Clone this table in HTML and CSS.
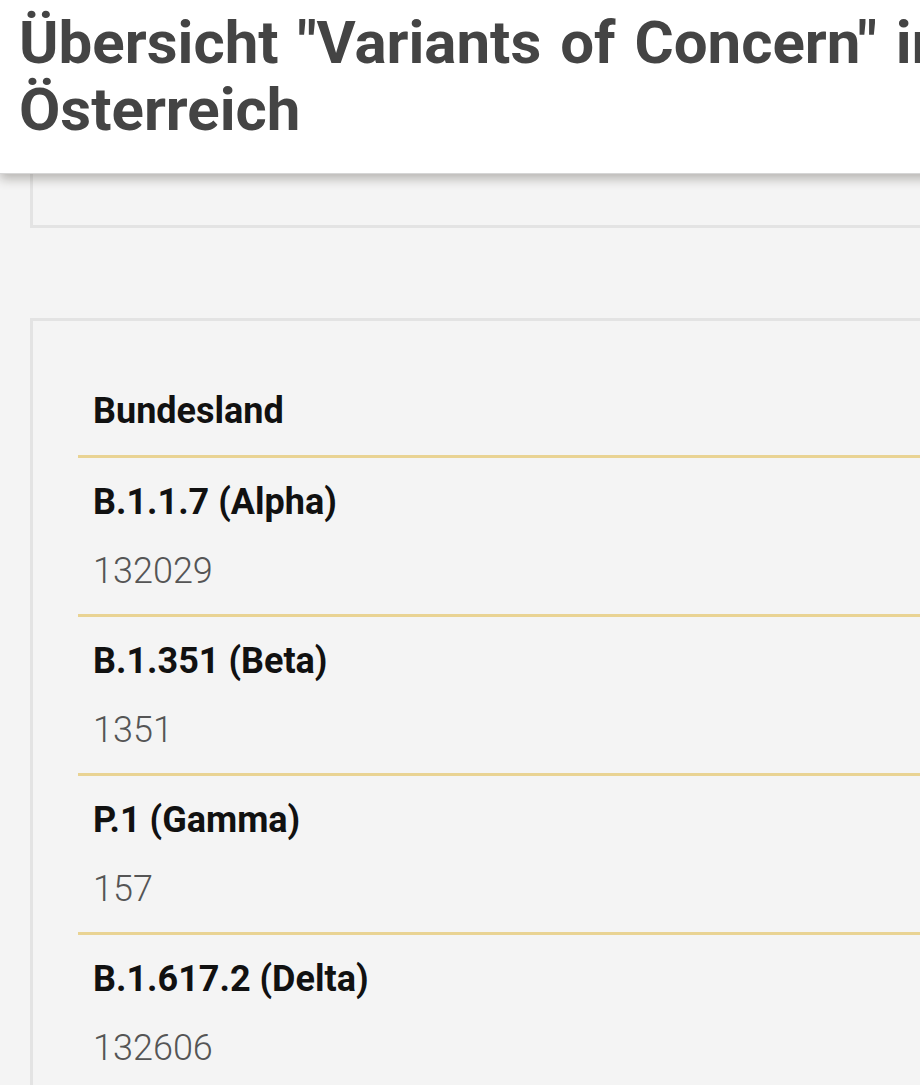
FILE: index.html
```html
<!DOCTYPE html>
<html lang="de">
<head>
<meta charset="utf-8">
<title>Übersicht Variants of Concern</title>
<link rel="stylesheet" href="styles.css">
</head>
<body>
<div class="page">
  <header class="topbar">
    <h1 class="title">Übersicht "Variants of Concern" in Österreich</h1>
  </header>
  <div class="card card-stub"></div>
  <section class="card table-card">
    <div class="head-cell">Bundesland</div>
    <div class="row">
      <div class="label">B.1.1.7 (Alpha)</div>
      <div class="value">132029</div>
    </div>
    <div class="row">
      <div class="label">B.1.351 (Beta)</div>
      <div class="value">1351</div>
    </div>
    <div class="row">
      <div class="label">P.1 (Gamma)</div>
      <div class="value">157</div>
    </div>
    <div class="row">
      <div class="label">B.1.617.2 (Delta)</div>
      <div class="value">132606</div>
    </div>
  </section>
</div>
</body>
</html>
```
FILE: styles.css
```css
html, body {
  margin: 0;
  padding: 0;
  background: #f4f4f4;
  overflow: hidden;
  font-family: Roboto, "Liberation Sans", sans-serif;
}

.page {
  width: 1000px;
}

.topbar {
  position: relative;
  z-index: 2;
  background: #ffffff;
  padding: 9px 0 30px 19px;
  box-shadow: 0 1px 0 #d6d6d6, 0 6px 10px rgba(60, 55, 45, 0.33);
}

.title {
  margin: 0;
  font-size: 60px;
  line-height: 67px;
  font-weight: 700;
  word-spacing: 4px;
  color: #444444;
}

.card {
  margin-left: 30px;
  border: 3px solid #e3e3e3;
  background: #f4f4f4;
}

.card-stub {
  border-top: none;
  height: 52px;
}

.table-card {
  margin-top: 90px;
  padding: 48px 0 0 45px;
  border-right: none;
  border-bottom: none;
}

.head-cell {
  padding: 15px 0 17px 15px;
  font-size: 36px;
  line-height: 54px;
  font-weight: 700;
  color: #111111;
}

.row {
  border-top: 3px solid #e9d393;
  padding: 17px 0 16px 15px;
}

.label {
  font-size: 36px;
  line-height: 54px;
  font-weight: 700;
  color: #111111;
}

.value {
  margin-top: 15px;
  font-size: 36px;
  line-height: 54px;
  font-weight: 300;
  color: #555555;
}
```
